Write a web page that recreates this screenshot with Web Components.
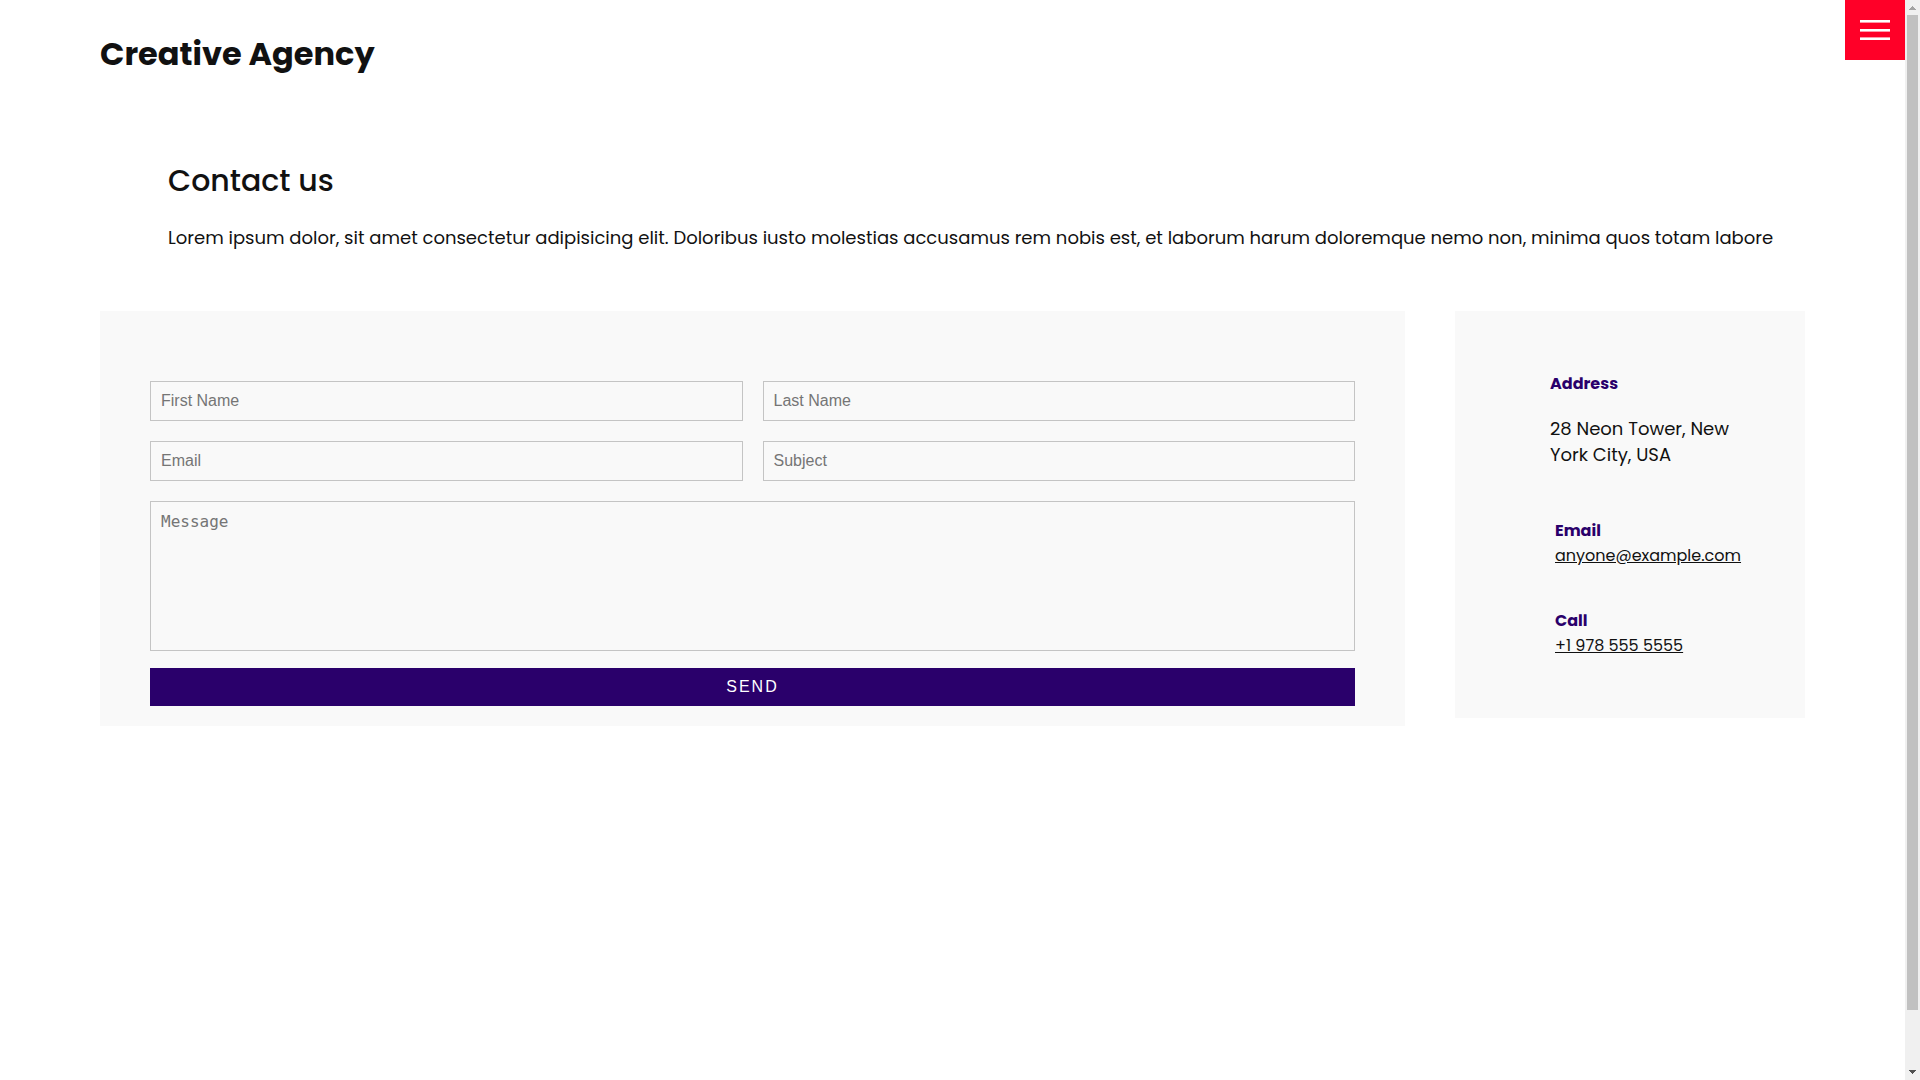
<!DOCTYPE html>
<html lang="en">
<head>
<meta charset="utf-8">
<title>Creative Agency - Contact us</title>
<style>
  html, body { height: 100%; margin: 0; }
  body {
    background: #fff;
    color: #111;
    font-family: Poppins, Inter, "Open Sans", sans-serif;
    font-size: 16px;
    line-height: 24px;
    overflow: hidden;
  }
</style>
</head>
<body>
<agency-page></agency-page>

<script>
  const define = (name, html, setup) => {
    const template = document.createElement("template");
    template.innerHTML = html;
    customElements.define(name, class extends HTMLElement {
      constructor() {
        super();
        this.attachShadow({ mode: "open" }).append(template.content.cloneNode(true));
      }
      connectedCallback() { if (setup) setup(this, this.shadowRoot); }
    });
  };

  /* Site name */
  define("site-header", `
    <style>
      :host { display: block; padding: 30px 0; }
      h1 { margin: 0; font-size: 32px; line-height: 48px; font-weight: 700; }
      a { color: inherit; text-decoration: none; }
    </style>
    <header><h1><a href="#"><slot></slot></a></h1></header>
  `);

  /* Red square button that opens the navigation */
  define("menu-toggle", `
    <style>
      :host { display: block; position: absolute; top: 0; right: 0; }
      button {
        display: flex; align-items: center; justify-content: center;
        width: 60px; height: 60px; padding: 0; border: 0;
        background: #ff0028; cursor: pointer;
      }
      svg { display: block; }
    </style>
    <button type="button" aria-label="Open menu">
      <svg width="30" height="20" viewBox="0 0 30 20" shape-rendering="crispEdges" aria-hidden="true">
        <path fill="#fff" d="M0 0h30v2H0zM0 9h30v2H0zM0 18h30v2H0z"/>
        <path fill="#ff99a9" d="M0 2h30v1H0zM0 11h30v1H0zM0 17h30v1H0z"/>
      </svg>
    </button>
  `);

  /* Title and introduction */
  define("page-intro", `
    <style>
      :host { display: block; padding: 50px 0 60px 68px; }
      h2 { margin: 0 0 20px; font-size: 30px; line-height: 46px; font-weight: 500; }
      p { margin: 0; font-size: 18px; line-height: 27px; }
    </style>
    <h2><slot name="title"></slot></h2>
    <p><slot></slot></p>
  `);

  /* One labelled field; "multiline" gives a textarea */
  define("form-field", `
    <style>
      :host { display: block; }
      .label {
        position: absolute; width: 1px; height: 1px;
        overflow: hidden; clip-path: inset(50%);
      }
      input, textarea {
        display: block; box-sizing: border-box; width: 100%; margin: 0;
        padding: 10px; border: 1px solid #c4c4c4; border-radius: 0;
        background: transparent; color: #111; font-size: 16px; outline: 0;
      }
      input { height: 40px; font-family: "Liberation Sans", Arial, sans-serif; }
      textarea { height: 150px; resize: none; font-family: "DejaVu Sans Mono", monospace; }
      ::placeholder { color: #757575; }
    </style>
  `, (host, root) => {
    if (root.querySelector("label")) return;
    const text = host.getAttribute("label");
    const label = document.createElement("label");
    label.className = "label";
    label.htmlFor = "control";
    const control = document.createElement(host.hasAttribute("multiline") ? "textarea" : "input");
    control.id = "control";
    control.name = host.getAttribute("name");
    control.placeholder = text;
    control.setAttribute("aria-label", text);
    if (control.localName === "input") control.type = host.getAttribute("type") || "text";
    root.append(label, control);
  });

  define("contact-form", `
    <style>
      :host { display: block; flex: 1; min-width: 0; padding: 70px 50px 20px; background: #f9f9f9; }
      .fields { display: grid; grid-template-columns: 1fr 1fr; gap: 20px; }
      .wide { grid-column: 1 / -1; }
      button {
        display: block; width: 100%; margin: 17px 0 0; padding: 10px; border: 0;
        background: #2a006b; color: #fff; cursor: pointer;
        font: 16px/18px "Liberation Sans", Arial, sans-serif;
        letter-spacing: 2px; text-transform: uppercase;
      }
    </style>
    <form>
      <div class="fields">
        <form-field label="First Name" name="first"></form-field>
        <form-field label="Last Name" name="last"></form-field>
        <form-field label="Email" name="email" type="email"></form-field>
        <form-field label="Subject" name="subject"></form-field>
        <form-field class="wide" label="Message" name="message" multiline></form-field>
      </div>
      <button type="submit">Send</button>
    </form>
  `);

  define("contact-details", `
    <style>
      :host { display: block; box-sizing: border-box; width: 350px; padding: 60px 60px 60px 95px; background: #f9f9f9; }
      h3 { margin: 0; color: #2a006b; font-size: 16px; line-height: 25px; font-weight: 700; }
      p { margin: 20px 0 50px; font-size: 18px; line-height: 26px; }
      ul { display: grid; gap: 40px; margin: 0; padding: 0 0 0 5px; list-style: none; }
      a { display: inline-block; color: #111; font-size: 16px; line-height: 25px; }
    </style>
    <h3>Address</h3>
    <p>28 Neon Tower, New York City, USA</p>
    <ul>
      <li><h3>Email</h3><a href="mailto:anyone@example.com">anyone@example.com</a></li>
      <li><h3>Call</h3><a href="tel:+19785555555">+1 978 555 5555</a></li>
    </ul>
  `);

  /* Vertical scroll track with arrows and thumb */
  define("scroll-track", `
    <style>
      :host { display: flex; flex-direction: column; flex: none; width: 15px; background: #f0f0f0; }
      svg { display: block; flex: none; }
      .lane { display: flex; flex-direction: column; flex: 1; padding: 0 2px; }
      .thumb { height: 94.8%; background: #c1c1c1; }
    </style>
    <svg width="15" height="15" shape-rendering="crispEdges" aria-hidden="true"><path fill="#a3a3a3" d="M7 6h1v1h1v1h1v1h1v1H4V9h1V8h1V7h1z"/></svg>
    <div class="lane"><div class="thumb"></div></div>
    <svg width="15" height="15" shape-rendering="crispEdges" aria-hidden="true"><path fill="#505050" d="M4 5h7v1h-1v1H9v1H8v1H7V8H6V7H5V6H4z"/></svg>
  `);

  define("agency-page", `
    <style>
      :host { display: flex; height: 100vh; }
      .view { position: relative; flex: 1; min-width: 0; overflow: hidden; }
      .content { padding: 0 100px; }
      .columns { display: flex; align-items: flex-start; gap: 50px; }
    </style>
    <div class="view">
      <div class="content">
        <site-header>Creative Agency</site-header>
        <main>
          <page-intro>
            <span slot="title">Contact us</span>
            Lorem ipsum dolor, sit amet consectetur adipisicing elit. Doloribus iusto molestias accusamus rem nobis est, et laborum harum doloremque nemo non, minima quos totam labore
          </page-intro>
          <div class="columns">
            <contact-form></contact-form>
            <contact-details></contact-details>
          </div>
        </main>
      </div>
      <menu-toggle></menu-toggle>
    </div>
    <scroll-track></scroll-track>
  `);
</script>
</body>
</html>
